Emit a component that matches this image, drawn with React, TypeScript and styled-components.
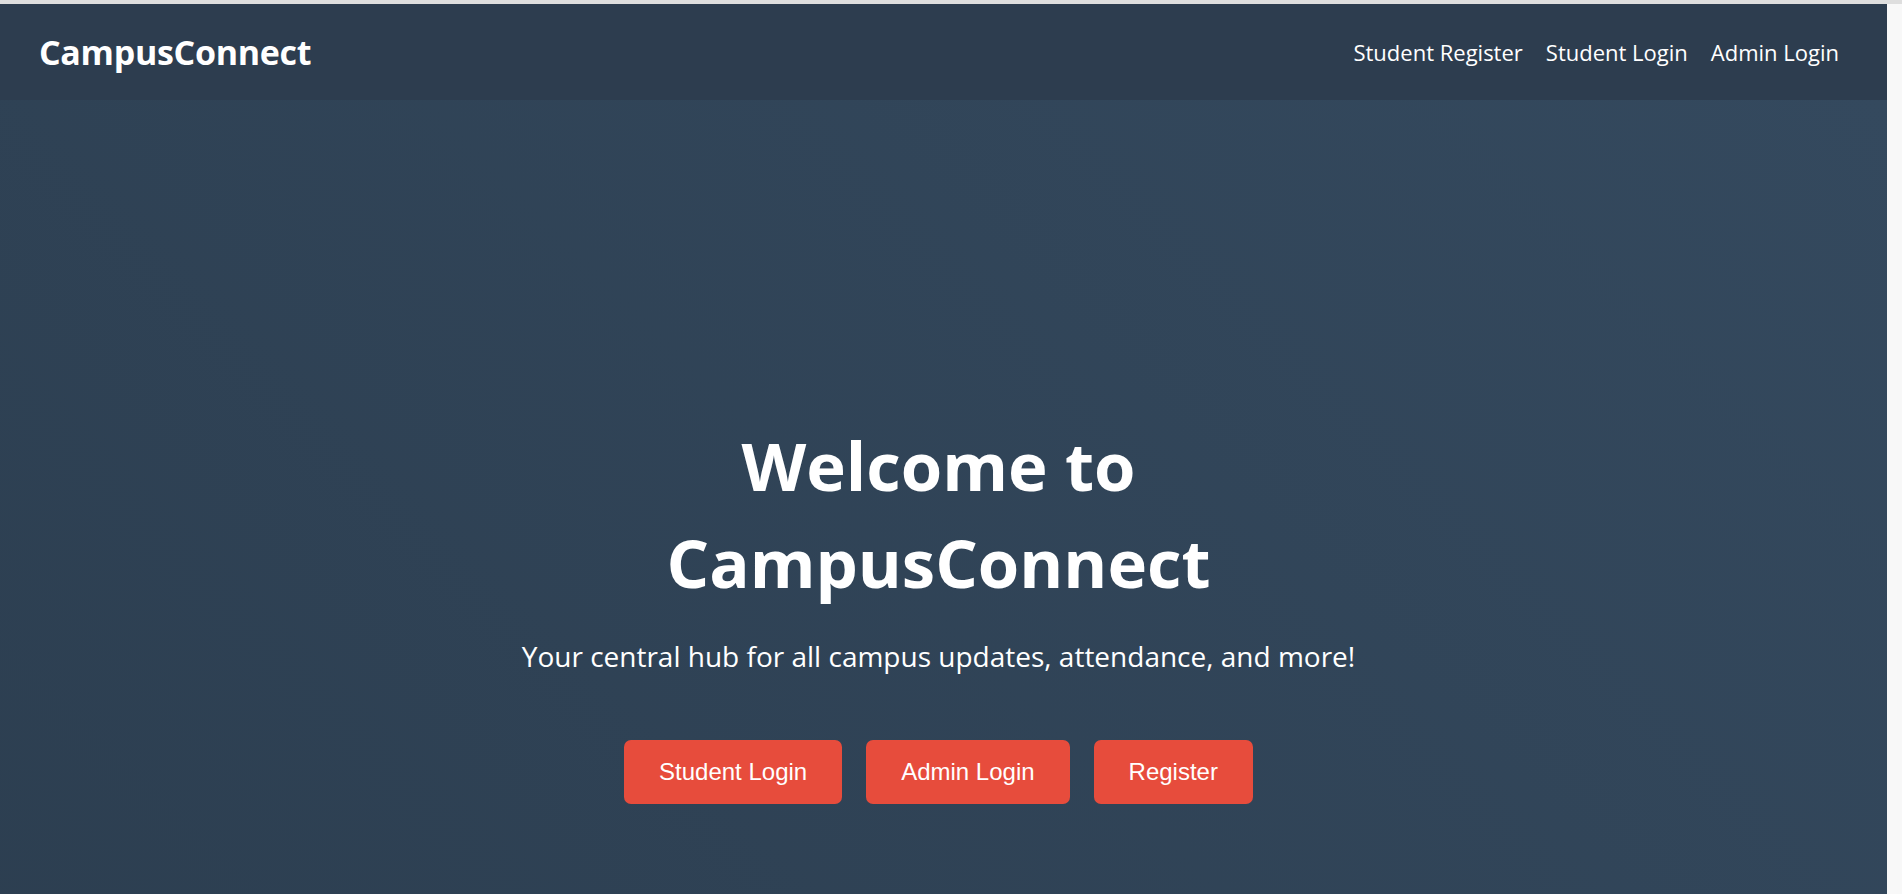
import styled, { createGlobalStyle } from 'styled-components';

const GlobalStyle = createGlobalStyle`
    html, body {
        margin: 0;
        padding: 0;
    }

    html {
        background: #f8f8f8;
    }

    body {
        font-family: "Open Sans", "Noto Sans", sans-serif;
        border-top: 4px solid #dedede;
    }

    #root {
        width: calc(100% - 15px);
    }

    * {
        box-sizing: border-box;
    }
`

const Header = styled.header`
    display: flex;
    justify-content: space-between;
    align-items: center;
    height: 96px;
    padding: 0 48px 0 39px;
    background: #2d3d4f;
`

const Logo = styled.h1`
    margin: 0;
    color: #fff;
    font-size: 34px;
    font-weight: 700;
    letter-spacing: -0.3px;
`

const NavList = styled.nav`
    display: flex;
    align-items: center;
    gap: 23px;
`

const NavLink = styled.a`
    color: #fff;
    font-size: 22px;
    text-decoration: none;
    cursor: pointer;
`

const Hero = styled.section`
    display: flex;
    flex-direction: column;
    justify-content: center;
    align-items: center;
    min-height: 1021px;
    padding-right: 10px;
    text-align: center;
    background: linear-gradient(45deg, #2c3e50, #34495e);
    color: #fff;
`

const Content = styled.div`
    max-width: 900px;
`

const Title = styled.h2`
    margin: 0 0 26px;
    font-size: 67px;
    line-height: 97px;
    font-weight: 700;
`

const Subtitle = styled.p`
    margin: 0 0 64px;
    font-size: 28px;
    line-height: 39px;
`

const ButtonRow = styled.div`
    display: flex;
    justify-content: center;
    gap: 24px;
`

const Button = styled.button`
    padding: 18px 35px;
    border: none;
    border-radius: 7px;
    background: #e74c3c;
    color: #fff;
    font-family: "Liberation Sans", Arial, sans-serif;
    font-size: 24px;
    cursor: pointer;
`

const App = () => {
    return (
        <>
            <GlobalStyle />
            <Header>
                <Logo>CampusConnect</Logo>
                <NavList>
                    <NavLink>Student Register</NavLink>
                    <NavLink>Student Login</NavLink>
                    <NavLink>Admin Login</NavLink>
                </NavList>
            </Header>
            <Hero>
                <Content>
                    <Title>Welcome to CampusConnect</Title>
                    <Subtitle>Your central hub for all campus updates, attendance, and more!</Subtitle>
                    <ButtonRow>
                        <Button>Student Login</Button>
                        <Button>Admin Login</Button>
                        <Button>Register</Button>
                    </ButtonRow>
                </Content>
            </Hero>
        </>
    )
}

export default App
